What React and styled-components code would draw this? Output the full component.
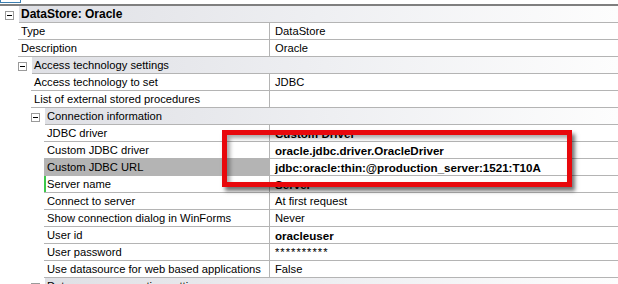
import React from "react";
import styled, { createGlobalStyle } from "styled-components";

const GlobalStyle = createGlobalStyle`
  html, body {
    margin: 0;
    padding: 0;
    background: #fff;
    overflow: hidden;
  }
  body {
    font-family: 'Liberation Sans', Arial, sans-serif;
    font-size: 11px;
    color: #000;
  }
`;

const Page = styled.div`
  position: relative;
  width: 618px;
  height: 284px;
  overflow: hidden;
`;

const TabStub = styled.div`
  width: 21px;
  height: 3px;
  border: 1px solid #3c7fb1;
  border-top: none;
  box-sizing: border-box;
`;

const Grid = styled.div`
  margin-top: 1px;
  border-top: 2px solid #7f7f7f;
  display: flex;
  flex-direction: column;
`;

const Row = styled.div`
  display: flex;
  height: 17px;
  flex-shrink: 0;
`;

const Gutter = styled.div`
  width: ${p => p.$indent}px;
  flex-shrink: 0;
  display: flex;
  align-items: center;
  justify-content: flex-end;
  padding-right: ${p => p.$pad}px;
  box-sizing: border-box;
`;

const Toggle = styled.span`
  position: relative;
  width: 9px;
  height: 9px;
  border: 1px solid #9a9a9a;
  box-sizing: border-box;
  background: #fff;
  margin-top: 1px;
  &::after {
    content: "";
    position: absolute;
    left: 1px;
    top: 3px;
    width: 5px;
    height: 1px;
    background: #000;
  }
`;

const Body = styled.div`
  flex: 1;
  display: flex;
  border-bottom: 1px solid #b4b4b4;
  background: ${p => (p.$group ? "linear-gradient(to right, #dfe0e5 0%, #eeeff2 50%, #fdfdfd 100%)" : "#fff")};
`;

const GroupLabel = styled.div`
  padding-left: 2px;
  line-height: 17px;
  font-weight: ${p => (p.$bold ? 700 : 400)};
  font-size: ${p => (p.$bold ? "12px" : "11.2px")};
  white-space: nowrap;
`;

const NameCell = styled.div`
  width: ${p => p.$width}px;
  flex-shrink: 0;
  box-sizing: border-box;
  padding-left: ${p => (p.$marker ? 1 : 3)}px;
  line-height: 17px;
  font-size: 11.2px;
  white-space: nowrap;
  overflow: hidden;
  background: ${p => (p.$selected ? "#b4b4b4" : "transparent")};
  border-left: ${p => (p.$marker ? "2px solid #3cc84a" : "none")};
`;

const ValueCell = styled.div`
  flex: 1;
  border-left: 1px solid #b4b4b4;
  padding-left: 5px;
  line-height: 17px;
  font-size: ${p => (p.$bold ? "11.6px" : "11.2px")};
  font-weight: ${p => (p.$bold ? 700 : 400)};
  letter-spacing: ${p => (p.$masked ? "1px" : "normal")};
  white-space: nowrap;
  overflow: hidden;
`;

const Callout = styled.div`
  position: absolute;
  left: 222px;
  top: 130px;
  width: 350px;
  height: 57px;
  box-sizing: border-box;
  border: 5px solid #e8080c;
  box-shadow: 3px 4px 4px rgba(0, 0, 0, 0.55), inset 3px 3px 4px rgba(0, 0, 0, 0.35);
  pointer-events: none;
`;

const DIVIDER = 269;

const gutters = { 0: 18, 1: 18, 2: 31, 3: 44 };
const groupGutters = { 0: 19, 1: 32, 2: 45 };

const rows = [
  { group: true, level: 0, name: "DataStore: Oracle" },
  { level: 1, name: "Type", value: "DataStore" },
  { level: 1, name: "Description", value: "Oracle" },
  { group: true, level: 1, name: "Access technology settings" },
  { level: 2, name: "Access technology to set", value: "JDBC" },
  { level: 2, name: "List of external stored procedures", value: "" },
  { group: true, level: 2, name: "Connection information" },
  { level: 3, name: "JDBC driver", value: "Custom Driver", bold: true },
  { level: 3, name: "Custom JDBC driver", value: "oracle.jdbc.driver.OracleDriver", bold: true },
  { level: 3, name: "Custom JDBC URL", value: "jdbc:oracle:thin:@production_server:1521:T10A", bold: true, selected: true },
  { level: 3, name: "Server name", value: "Server", bold: true, marker: true },
  { level: 3, name: "Connect to server", value: "At first request" },
  { level: 3, name: "Show connection dialog in WinForms", value: "Never" },
  { level: 3, name: "User id", value: "oracleuser", bold: true },
  { level: 3, name: "User password", value: "**********", masked: true },
  { level: 3, name: "Use datasource for web based applications", value: "False" },
  { group: true, level: 2, name: "Data source connection settings" },
];

function PropertyRow({ row }) {
  if (row.group) {
    const indent = groupGutters[row.level];
    return (
      <Row>
        <Gutter $indent={indent} $pad={5}>
          <Toggle />
        </Gutter>
        <Body $group>
          <GroupLabel $bold={row.level === 0}>{row.name}</GroupLabel>
        </Body>
      </Row>
    );
  }
  const indent = gutters[row.level];
  return (
    <Row>
      <Gutter $indent={indent} $pad={0} />
      <Body>
        <NameCell $width={DIVIDER - indent} $selected={row.selected} $marker={row.marker}>
          {row.name}
        </NameCell>
        <ValueCell $bold={row.bold} $masked={row.masked}>{row.value}</ValueCell>
      </Body>
    </Row>
  );
}

export default function App() {
  return (
    <Page>
      <GlobalStyle />
      <TabStub />
      <Grid>
        {rows.map(row => (
          <PropertyRow key={row.name} row={row} />
        ))}
      </Grid>
      <Callout />
    </Page>
  );
}
